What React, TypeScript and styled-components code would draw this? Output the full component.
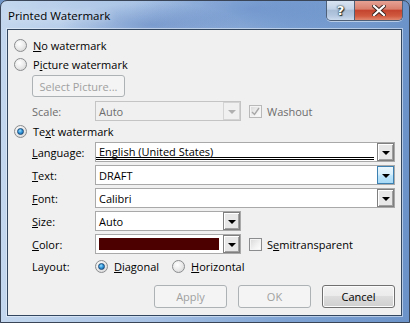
import React from "react";
import styled, { createGlobalStyle, css } from "styled-components";

const Global = createGlobalStyle`
  html, body { margin: 0; padding: 0; background: #6f95c6; }
  body { font-family: "Open Sans", "Noto Sans", sans-serif; font-size: 11px; color: #000; }
`;

const Window = styled.div`
  width: 410px;
  height: 323px;
  box-sizing: border-box;
  border: 1px solid #3a4658;
  border-radius: 7px 7px 0 0;
  background:
    radial-gradient(ellipse 90px 22px at 150px 24px, rgba(70, 110, 180, 0.45), transparent),
    radial-gradient(ellipse 120px 30px at 250px 8px, rgba(80, 120, 190, 0.35), transparent),
    linear-gradient(90deg, #c3d7ee 0%, #a9c3e5 35%, #7ea3d3 70%, #6c93c9 100%);
  display: flex;
  flex-direction: column;
  padding: 0 7px 6px 6px;
  overflow: hidden;
`;

const TitleBar = styled.div`
  height: 28px;
  display: flex;
  align-items: flex-start;
`;

const Title = styled.div`
  padding: 7px 0 0 1px;
  font-size: 11.5px;
  color: #000;
  text-shadow: 0 0 8px rgba(255, 255, 255, 0.9);
`;

const Caption = styled.div`
  margin-left: auto;
  margin-right: -1px;
  margin-top: -1px;
  display: flex;
  height: 20px;
  border: 1px solid #4e5f78;
  border-top: none;
  border-radius: 0 0 5px 5px;
  overflow: hidden;
  box-shadow: 0 1px 0 rgba(255, 255, 255, 0.5);
`;

const CaptionButton = styled.div<{ $close?: boolean }>`
  width: ${(p) => (p.$close ? "47px" : "27px")};
  display: flex;
  align-items: center;
  justify-content: center;
  color: #fff;
  font-family: "DejaVu Sans", sans-serif;
  font-weight: bold;
  font-size: 13px;
  text-shadow: 0 0 1px #233, 0 0 2px #233, 1px 1px 1px #233;
  ${(p) =>
    p.$close
      ? css`
          background: linear-gradient(#e7a699 0%, #d9806e 45%, #c5442f 52%, #d05a3f 80%, #e18870 100%);
        `
      : css`
          border-right: 1px solid #4e5f78;
          background: linear-gradient(#dbe6f3 0%, #c3d3e8 45%, #a8bcd6 52%, #b5c8e0 80%, #cddcee 100%);
        `}
`;

const Panel = styled.div`
  flex: 1;
  border: 1px solid #33465f;
  box-shadow: 0 0 0 1px rgba(235, 242, 250, 0.55);
  background: #f0f0f0;
  display: flex;
  flex-direction: column;
  padding: 6px 6px 7px 6px;
`;

const OptionRow = styled.label<{ $top?: number }>`
  height: 19px;
  margin-top: ${(p) => p.$top ?? 0}px;
  display: flex;
  align-items: center;
  gap: 6px;
`;

const Indent = styled.div<{ $top?: number }>`
  margin-left: 18px;
  margin-top: ${(p) => p.$top ?? 0}px;
  display: flex;
  flex-direction: column;
  gap: 3px;
`;

const FieldRow = styled.div<{ $dim?: boolean; $top?: number }>`
  display: flex;
  align-items: center;
  height: 20px;
  margin-top: ${(p) => p.$top ?? 0}px;
  color: ${(p) => (p.$dim ? "#6d6d6d" : "#000")};
`;

const Label = styled.span`
  width: 63px;
  flex: none;
`;

const Radio = styled.span<{ $on?: boolean }>`
  width: 11px;
  height: 11px;
  flex: none;
  border-radius: 50%;
  border: 1px solid #8a8c8e;
  background: radial-gradient(circle at 40% 35%, #ffffff 0%, #eaeaea 50%, #cfcfcf 100%);
  display: flex;
  align-items: center;
  justify-content: center;
  &::after {
    content: "";
    display: ${(p) => (p.$on ? "block" : "none")};
    width: 5px;
    height: 5px;
    border-radius: 50%;
    border: 1px solid #1b4a78;
    background: radial-gradient(circle at 40% 35%, #9ee0ff 0%, #3399dd 45%, #135a96 100%);
  }
`;

const Check = styled.span<{ $dim?: boolean }>`
  width: 11px;
  height: 11px;
  flex: none;
  border: 1px solid ${(p) => (p.$dim ? "#b9b9b9" : "#8a8c8e")};
  background: linear-gradient(135deg, #d8d8d8 0%, #f2f2f2 60%, #ffffff 100%);
  box-shadow: inset 0 0 0 1px #f4f4f4;
  display: flex;
  align-items: center;
  justify-content: center;
`;

const CheckRow = styled.label<{ $dim?: boolean }>`
  display: flex;
  align-items: center;
  gap: 5px;
  margin-left: 8px;
  color: ${(p) => (p.$dim ? "#6d6d6d" : "#000")};
`;

const Combo = styled.div<{ $wide?: boolean; $dim?: boolean }>`
  width: ${(p) => (p.$wide ? "300px" : "146px")};
  height: 20px;
  box-sizing: border-box;
  display: flex;
  border: 1px solid ${(p) => (p.$dim ? "#c4c4c4" : "#a9a9a9")};
  background: ${(p) => (p.$dim ? "#f0f0f0" : "#fff")};
  color: ${(p) => (p.$dim ? "#6d6d6d" : "#000")};
`;

const ComboText = styled.div<{ $double?: boolean }>`
  flex: 1;
  padding-left: 3px;
  display: flex;
  align-items: center;
  box-sizing: border-box;
  ${(p) =>
    p.$double &&
    css`
      margin-right: 3px;
      border-bottom: 3px double #000;
      height: 17px;
      padding-top: 2px;
    `}
`;

const Swatch = styled.div<{ $color: string }>`
  flex: 1;
  margin: 3px 4px 3px 3px;
  background: ${(p) => p.$color};
`;

const Arrow = styled.div<{ $hot?: boolean; $dim?: boolean }>`
  width: 17px;
  flex: none;
  box-sizing: border-box;
  display: flex;
  align-items: center;
  justify-content: center;
  ${(p) =>
    p.$hot
      ? css`
          border: 1px solid #3c7fb1;
          background: linear-gradient(#eaf6fd 0%, #d9f0fc 45%, #bee6fd 55%, #a7d9f5 100%);
        `
      : p.$dim
      ? css`
          border: 1px solid #d4d4d4;
          background: #f0f0f0;
        `
      : css`
          border: 1px solid #7f7f7f;
          box-shadow: inset 1px 1px 0 #fff, inset -1px -1px 0 #a0a0a0;
          background: #e8e8e8;
        `}
  &::after {
    content: "";
    border-left: 4px solid transparent;
    border-right: 4px solid transparent;
    border-top: 4px solid ${(p) => (p.$dim ? "#b0b0b0" : "#000")};
    margin-top: 1px;
  }
`;

const Button = styled.button<{ $disabled?: boolean; $w: number; $h?: number }>`
  width: ${(p) => p.$w}px;
  height: ${(p) => p.$h ?? 23}px;
  box-sizing: border-box;
  border-radius: 3px;
  font: inherit;
  padding: 0;
  ${(p) =>
    p.$disabled
      ? css`
          border: 1px solid #adb2b5;
          background: #f4f4f4;
          color: #a0a0a0;
        `
      : css`
          border: 1px solid #707070;
          background: linear-gradient(#f2f2f2 0%, #ebebeb 49%, #dddddd 50%, #cfcfcf 100%);
          box-shadow: inset 0 0 0 1px #fcfcfc;
          color: #000;
        `}
`;

const Footer = styled.div`
  margin-top: auto;
  display: flex;
  justify-content: flex-end;
  gap: 11px;
`;

const LayoutRow = styled.div`
  display: flex;
  align-items: center;
  height: 18px;
  margin-top: 3px;
  margin-left: 18px;
`;

const RadioChoice = styled.label<{ $gap: number }>`
  display: flex;
  align-items: center;
  gap: 6px;
  margin-right: ${(p) => p.$gap}px;
`;

const U = styled.span`
  text-decoration: underline;
`;

const DimCheck = () => (
  <svg width="9" height="9" viewBox="0 0 9 9">
    <path d="M1 5 L3.5 7.5 L8 1" fill="none" stroke="#a8a8a8" strokeWidth="1.4" />
  </svg>
);

const CloseGlyph = () => (
  <svg width="14" height="11" viewBox="0 0 14 11">
    <path d="M2 1 L12 10 M12 1 L2 10" stroke="#3a2420" strokeWidth="4" strokeLinecap="square" />
    <path d="M2 1 L12 10 M12 1 L2 10" stroke="#fff" strokeWidth="2.2" strokeLinecap="square" />
  </svg>
);

export default function App() {
  return (
    <>
      <Global />
      <Window>
        <TitleBar>
          <Title>Printed Watermark</Title>
          <Caption>
            <CaptionButton>?</CaptionButton>
            <CaptionButton $close>
              <CloseGlyph />
            </CaptionButton>
          </Caption>
        </TitleBar>
        <Panel>
          <OptionRow>
            <Radio />
            <span>
              <U>N</U>o watermark
            </span>
          </OptionRow>
          <OptionRow>
            <Radio />
            <span>
              P<U>i</U>cture watermark
            </span>
          </OptionRow>
          <Indent $top={1}>
            <Button $disabled $w={93} $h={22}>
              Select Picture...
            </Button>
            <FieldRow $dim $top={1}>
              <Label>Scale:</Label>
              <Combo $dim>
                <ComboText>Auto</ComboText>
                <Arrow $dim />
              </Combo>
              <CheckRow $dim>
                <Check $dim>
                  <DimCheck />
                </Check>
                Washout
              </CheckRow>
            </FieldRow>
          </Indent>
          <OptionRow $top={1}>
            <Radio $on />
            <span>
              Te<U>x</U>t watermark
            </span>
          </OptionRow>
          <Indent $top={1}>
            <FieldRow>
              <Label>
                <U>L</U>anguage:
              </Label>
              <Combo $wide>
                <ComboText $double>English (United States)</ComboText>
                <Arrow />
              </Combo>
            </FieldRow>
            <FieldRow>
              <Label>
                <U>T</U>ext:
              </Label>
              <Combo $wide>
                <ComboText>DRAFT</ComboText>
                <Arrow $hot />
              </Combo>
            </FieldRow>
            <FieldRow>
              <Label>
                <U>F</U>ont:
              </Label>
              <Combo $wide>
                <ComboText>Calibri</ComboText>
                <Arrow />
              </Combo>
            </FieldRow>
            <FieldRow>
              <Label>
                <U>S</U>ize:
              </Label>
              <Combo>
                <ComboText>Auto</ComboText>
                <Arrow />
              </Combo>
            </FieldRow>
            <FieldRow>
              <Label>
                <U>C</U>olor:
              </Label>
              <Combo>
                <Swatch $color="#4d0000" />
                <Arrow />
              </Combo>
              <CheckRow>
                <Check />
                <span>
                  S<U>e</U>mitransparent
                </span>
              </CheckRow>
            </FieldRow>
          </Indent>
          <LayoutRow>
            <Label>Layout:</Label>
            <RadioChoice $gap={13}>
              <Radio $on />
              <span>
                <U>D</U>iagonal
              </span>
            </RadioChoice>
            <RadioChoice $gap={0}>
              <Radio />
              <span>
                <U>H</U>orizontal
              </span>
            </RadioChoice>
          </LayoutRow>
          <Footer>
            <Button $disabled $w={73}>
              Apply
            </Button>
            <Button $disabled $w={73}>
              OK
            </Button>
            <Button $w={73}>Cancel</Button>
          </Footer>
        </Panel>
      </Window>
    </>
  );
}
